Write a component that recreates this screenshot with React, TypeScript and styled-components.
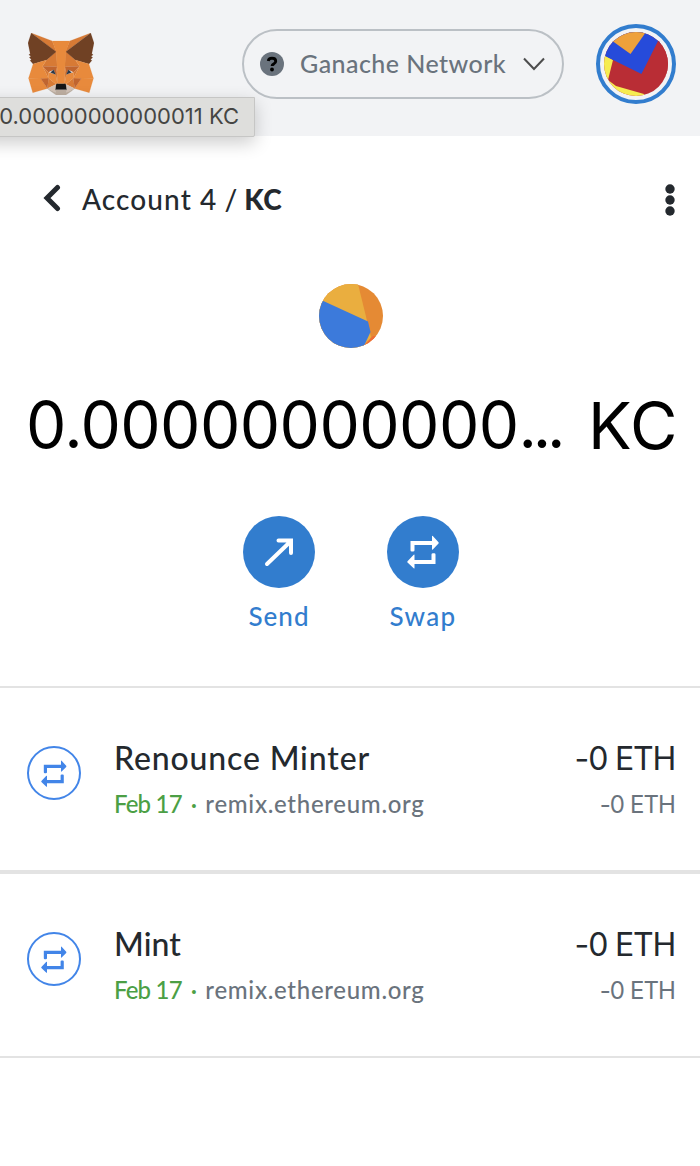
import React from "react";
import styled, { createGlobalStyle } from "styled-components";

const GlobalStyle = createGlobalStyle`
  * { box-sizing: border-box; }
  body { margin: 0; background: #fff; font-family: Lato, "Liberation Sans", sans-serif; color: #24292e; }
`;

const Screen = styled.div`
  position: relative;
  width: 700px;
  height: 1166px;
  overflow: hidden;
  background: #fff;
`;

const Header = styled.header`
  display: flex;
  align-items: center;
  height: 136px;
  padding: 0 24px 8px 28px;
  background: #f2f3f5;
`;

const FoxSvg = styled.svg`
  display: block;
  width: 66px;
  height: 62px;
`;

const NetworkPill = styled.button`
  display: flex;
  align-items: center;
  width: 322px;
  height: 70px;
  margin: 0 32px 0 auto;
  padding: 0 17px 0 16px;
  border: 2px solid #bbc0c5;
  border-radius: 35px;
  background: transparent;
  color: #6a737d;
  font-family: inherit;
`;

const Text = styled.span<{ $size: number; $track?: number; $weight?: number; $color?: string }>`
  font-size: ${(p) => p.$size}px;
  letter-spacing: ${(p) => p.$track ?? 0}px;
  font-weight: ${(p) => p.$weight ?? 500};
  color: ${(p) => p.$color ?? "inherit"};
  line-height: 1.4;
  white-space: nowrap;
`;

const NetworkName = styled(Text)`
  padding-bottom: 2px;
`;

const Figures = styled(Text)`
  font-family: Inter, "Liberation Sans", sans-serif;
  font-weight: 400;
`;

const QuestionBadge = styled.svg`
  width: 24px;
  height: 24px;
  margin-right: 16px;
`;

const Chevron = styled.svg`
  width: 22px;
  height: 14px;
  margin-left: auto;
`;

const AccountRing = styled.div`
  display: flex;
  align-items: center;
  justify-content: center;
  width: 80px;
  height: 80px;
  border: 4px solid #327dce;
  border-radius: 50%;
`;

const Tooltip = styled.div`
  position: absolute;
  top: 97px;
  left: -20px;
  width: 275px;
  height: 40px;
  padding: 0 15px 2px 0;
  display: flex;
  align-items: center;
  justify-content: flex-end;
  background: #dededc;
  border: 1px solid #c6c6c5;
  border-radius: 0 0 2px 0;
  box-shadow: 0 6px 18px rgba(0, 0, 0, 0.2);
`;

const Breadcrumb = styled.nav`
  display: flex;
  align-items: center;
  height: 128px;
  padding: 0 25px 0 43px;
`;

const BackIcon = styled.svg`
  width: 19px;
  height: 28px;
  margin: -4px 20px 0 0;
`;

const Account = styled(Text)`
  margin-right: 7px;
`;

const Slash = styled(Text)`
  margin-right: 7px;
`;

const Kebab = styled.svg`
  width: 10px;
  height: 32px;
  margin-left: auto;
`;

const Overview = styled.section`
  display: flex;
  flex-direction: column;
  align-items: center;
  height: 424px;
  padding: 20px 0 0 2px;
  border-bottom: 2px solid #e3e3e3;
`;

const Balance = styled.div`
  display: flex;
  align-self: stretch;
  justify-content: space-between;
  margin-top: 32px;
  padding: 0 22px 0 24px;
  height: 90px;
  color: #000;
`;

const Actions = styled.div`
  display: flex;
  gap: 72px;
  margin-top: 46px;
`;

const Action = styled.button`
  display: flex;
  flex-direction: column;
  align-items: center;
  width: 72px;
  gap: 10px;
  padding: 0;
  border: 0;
  background: none;
  color: #327dce;
  font-family: inherit;
`;

const ActionDisc = styled.span`
  display: flex;
  align-items: center;
  justify-content: center;
  width: 72px;
  height: 72px;
  border-radius: 50%;
  background: #327dce;
  color: #fff;
`;

const Activity = styled.article<{ $rule: number }>`
  display: flex;
  height: ${(p) => 182 + p.$rule}px;
  padding: 48px 25px 0 27px;
  border-bottom: ${(p) => p.$rule}px solid #e3e3e3;
`;

const ActivityIcon = styled.span`
  display: flex;
  align-items: center;
  justify-content: center;
  width: 54px;
  height: 54px;
  margin: 10px 33px 0 0;
  padding-top: 2px;
  border: 2px solid #4285e8;
  border-radius: 50%;
  color: #4285e8;
`;

const ActivityBody = styled.div`
  display: flex;
  flex-direction: column;
  gap: 6px;
`;

const ActivityAmount = styled(ActivityBody)`
  margin-left: auto;
  padding-top: 1px;
  align-items: flex-end;
`;

const ActivityMeta = styled.div`
  display: flex;
  align-items: center;
  gap: 9px;
`;

const foxFacets: [string, string][] = [
  ["#d77a35", "274.1,35.5 174.6,109.4 193,65.8"],
  ["#d77a35", "44.4,35.5 143.1,110.1 125.6,65.8"],
  ["#d77a35", "103.6,138.2 87.8,162.1 144.1,164.6 142.1,104.1"],
  ["#d77a35", "214.9,138.2 175.9,103.4 174.6,164.6 230.8,162.1"],
  ["#e88a3c", "50.1,263 106.8,247.4 80.3,206.8 33.9,207.7"],
  ["#e88a3c", "268.5,263 211.8,247.4 238.3,206.8 284.8,207.7"],
  ["#d77a35", "106.8,247.4 140.6,230.9 111.4,208.1"],
  ["#d77a35", "177.9,230.9 211.8,247.4 207.1,208.1"],
  ["#d4c2b5", "211.8,247.4 177.9,230.9 180.6,253 180.3,262.3"],
  ["#d4c2b5", "106.8,247.4 138.3,262.3 138.1,253 140.6,230.9"],
  ["#c0652f", "106.8,247.4 111.6,206.8 80.3,207.7"],
  ["#c0652f", "207,206.8 211.8,247.4 238.3,207.7"],
  ["#c0652f", "230.8,162.1 174.6,164.6 179.8,193.5 188.1,176.1 208.1,185.2"],
  ["#c0652f", "110.6,185.2 130.6,176.1 138.8,193.5 144.1,164.6 87.8,162.1"],
  ["#d77a35", "87.8,162.1 111.4,208.1 110.6,185.2"],
  ["#d77a35", "208.1,185.2 207.1,208.1 230.8,162.1"],
  ["#d77a35", "144.1,164.6 138.8,193.5 145.4,227.6 146.9,182.7"],
  ["#d77a35", "174.6,164.6 171.9,182.6 173.1,227.6 179.8,193.5"],
  ["#e88a3c", "179.8,193.5 173.1,227.6 177.9,230.9 207.1,208.1 208.1,185.2"],
  ["#e88a3c", "110.6,185.2 111.4,208.1 140.6,230.9 145.4,227.6 138.8,193.5"],
  ["#bdaea1", "180.3,262.3 180.6,253 178.1,250.8 140.4,250.8 138.1,253 138.3,262.3 106.8,247.4 117.8,256.4 140.1,271.9 178.4,271.9 200.8,256.4 211.8,247.4"],
  ["#161616", "177.9,230.9 173.1,227.6 145.4,227.6 140.6,230.9 138.1,253 140.4,250.8 178.1,250.8 180.6,253"],
  ["#704124", "278.3,114.2 286.8,73.4 274.1,35.5 177.9,106.9 214.9,138.2 267.2,153.5 278.8,140 273.8,136.4 281.8,129.1 275.6,124.3 283.6,118.2"],
  ["#704124", "31.8,73.4 40.3,114.2 34.9,118.2 42.9,124.3 36.8,129.1 44.8,136.4 39.8,140 51.3,153.5 103.6,138.2 140.6,106.9 44.4,35.5"],
  ["#e88a3c", "267.2,153.5 214.9,138.2 230.8,162.1 207.1,208.1 238.3,207.7 284.8,207.7"],
  ["#e88a3c", "103.6,138.2 51.3,153.5 33.9,207.7 80.3,207.7 111.4,208.1 87.8,162.1"],
  ["#e88a3c", "174.6,164.6 177.9,106.9 193.1,65.8 125.6,65.8 140.6,106.9 144.1,164.6 145.3,182.8 145.4,227.6 173.1,227.6 173.3,182.8"],
  ["#2c3847", "138.8,193.5 118.6,186.2 130.5,176.1"],
  ["#2c3847", "179.7,193.5 188,176.1 200,186.2"],
];

const Fox = () => (
  <FoxSvg viewBox="31.8 35.5 255 236.4" preserveAspectRatio="none">
    {foxFacets.map(([fill, points], i) => (
      <polygon key={i} fill={fill} stroke={fill} strokeWidth="0.6" points={points} />
    ))}
  </FoxSvg>
);

const AccountAvatar = () => (
  <svg width="64" height="64" viewBox="0 0 64 64">
    <clipPath id="account"><circle cx="32" cy="32" r="32" /></clipPath>
    <g clipPath="url(#account)">
      <rect width="64" height="64" fill="#b92d35" />
      <path d="M0 23 9 28 4 48 12 54 40 62 40 64 0 64Z" fill="#f6ec51" />
      <path d="M0 0H64L37.500 42 0 23.500Z" fill="#264bda" />
      <path d="M54 9 37.500 42H64V0Z" fill="#b92d35" />
      <path d="M0 0H42L26.500 22 0 3Z" fill="#eea13b" />
    </g>
  </svg>
);

const TokenAvatar = () => (
  <svg width="64" height="64" viewBox="0 0 64 64">
    <clipPath id="token"><circle cx="32" cy="32" r="32" /></clipPath>
    <g clipPath="url(#token)">
      <rect width="64" height="64" fill="#e58a34" />
      <path d="M0 0H39L52 53 46 64H0Z" fill="#eaae3f" />
      <path d="M54 52 44 62 50 64 58 52Z" fill="#ef6b35" />
      <path d="M0 15 49 37.500 51.500 48 44 64H0Z" fill="#3c7adb" />
    </g>
  </svg>
);

const SwapIcon = ({ scale = 1 }: { scale?: number }) => (
  <svg width={32 * scale} height={34 * scale} viewBox="0 0 32 34" fill="currentColor">
    <path d="M3.500 6H25V1.200Q25 .3 25.800 1L31.500 7.200Q32 8 31.500 8.600L25.800 14.500Q25 15 25 14.200V10H7.500V15.200Q7.500 16.500 6 16.500H4.800Q3.500 16.500 3.500 15.200Z" />
    <path d="M28.500 29H7.500V33Q7.500 34 6.700 33.300L.5 27.600Q0 27 .5 26.300L6.700 19.800Q7.500 19.300 7.500 20.200V25H24.500V19.400Q24.500 18.200 26 18.200H27.200Q28.500 18.200 28.500 19.400Z" />
  </svg>
);

const SendIcon = () => (
  <svg width="30" height="30" viewBox="0 0 30 30" fill="none" stroke="#fff" strokeWidth="4" strokeLinecap="round" strokeLinejoin="miter">
    <path d="M3 27 27 4M14.500 3.500H27V16" />
  </svg>
);

const activities = [
  { title: "Renounce Minter", track: 0.85, rule: 4 },
  { title: "Mint", track: 0.1, rule: 2 },
];

export default function App() {
  return (
    <Screen>
      <GlobalStyle />
      <Header>
        <Fox />
        <NetworkPill>
          <QuestionBadge viewBox="0 0 24 24">
            <circle cx="12" cy="12" r="12" fill="#6a737d" />
            <path d="M8.300 9Q8.600 6.300 12 6.300 15.700 6.300 15.700 9.200 15.700 10.800 13.900 11.800 12.100 12.600 12.100 14" fill="none" stroke="#000" strokeWidth="2.900" />
            <circle cx="12" cy="17.500" r="1.900" />
          </QuestionBadge>
          <NetworkName $size={25} $track={0.45}>Ganache Network</NetworkName>
          <Chevron viewBox="0 0 22 14" fill="none" stroke="#4d4d4d" strokeWidth="2">
            <path d="M1 1.500 11 12 21 1.500" />
          </Chevron>
        </NetworkPill>
        <AccountRing><AccountAvatar /></AccountRing>
      </Header>
      <Breadcrumb>
        <BackIcon viewBox="0 0 19 28" fill="none" stroke="#24292e" strokeWidth="5" strokeLinecap="round">
          <path d="M14.500 3.500 4 14 14.500 24.500" />
        </BackIcon>
        <Account $size={28} $track={1.1}>Account 4</Account>
        <Slash $size={28}>/</Slash>
        <Text $size={28} $track={0.6} $weight={900}>KC</Text>
        <Kebab viewBox="0 0 10 32" fill="#24292e">
          <circle cx="5" cy="5" r="4.700" />
          <circle cx="5" cy="16" r="4.700" />
          <circle cx="5" cy="27" r="4.700" />
        </Kebab>
      </Breadcrumb>
      <Overview>
        <TokenAvatar />
        <Balance>
          <div>
            <Figures $size={64} $track={-0.55}>0.00000000000</Figures>
            <Figures $size={64} $track={-4.2}>...</Figures>
          </div>
          <Figures $size={65} $track={0.5}>KC</Figures>
        </Balance>
        <Actions>
          <Action>
            <ActionDisc><SendIcon /></ActionDisc>
            <Text $size={26} $track={1}>Send</Text>
          </Action>
          <Action>
            <ActionDisc><SwapIcon /></ActionDisc>
            <Text $size={26} $track={1.3}>Swap</Text>
          </Action>
        </Actions>
      </Overview>
      {activities.map((a) => (
        <Activity key={a.title} $rule={a.rule}>
          <ActivityIcon><SwapIcon scale={0.8} /></ActivityIcon>
          <ActivityBody>
            <Text $size={32} $track={a.track}>{a.title}</Text>
            <ActivityMeta>
              <Text $size={24} $track={-0.8} $color="#4c9f45">Feb 17</Text>
              <Text $size={24} $track={-0.8} $color="#4c9f45">·</Text>
              <Text $size={24} $track={0.7} $color="#6a737d">remix.ethereum.org</Text>
            </ActivityMeta>
          </ActivityBody>
          <ActivityAmount>
            <Figures $size={32} $track={-1.2}>-0 ETH</Figures>
            <Figures $size={24} $track={-0.9} $color="#6a737d">-0 ETH</Figures>
          </ActivityAmount>
        </Activity>
      ))}
      <Tooltip>
        <Figures $size={22} $color="#454543">0.00000000000011 KC</Figures>
      </Tooltip>
    </Screen>
  );
}
